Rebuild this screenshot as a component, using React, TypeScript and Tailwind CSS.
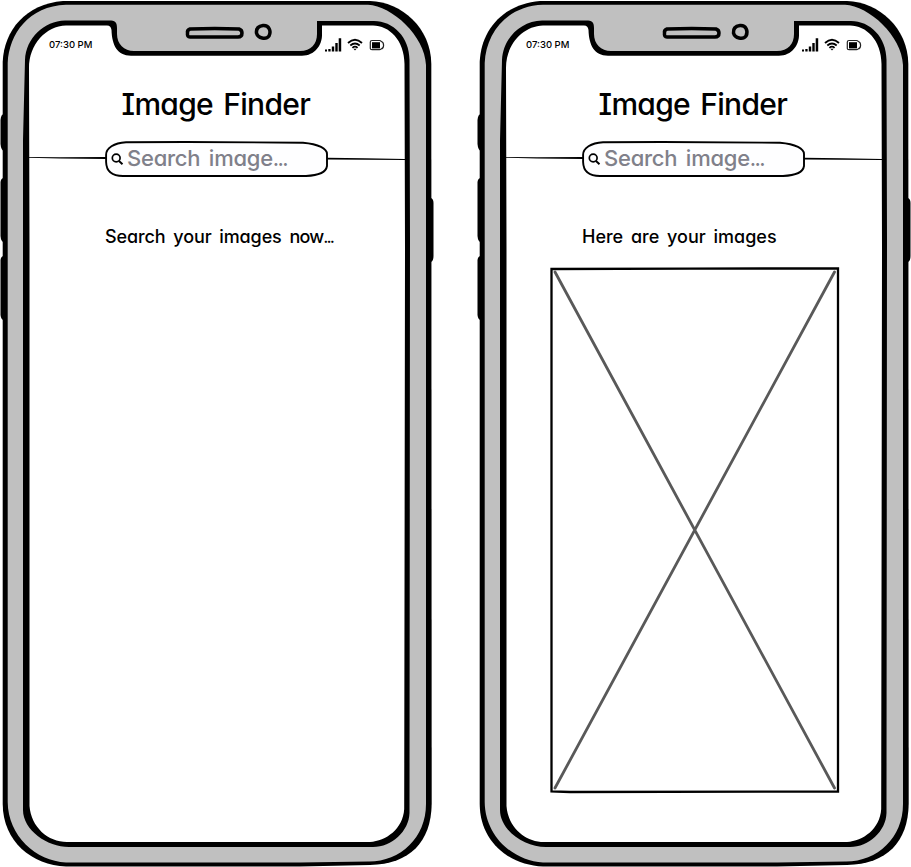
import type { ReactNode } from "react";

const SANS = "font-['Inter','Noto_Sans',sans-serif]";

function PhoneFrame() {
  return (
    <svg className="absolute inset-0" width="434" height="867" viewBox="0 0 434 867" fill="none">
      <path
        d="M4 114 Q1 114 .5 120 V144 Q1 150 4 151 H8 V114Z M4 178 Q1 178 .5 182 V236 Q1 242 4 242 H8 V178Z M4 256 Q1 256 .5 260 V315 Q1 320 4 320 H8 V256Z M428 198 H431 Q433.500 199 433.500 203 V256 Q433.500 261 431 262 H428Z"
        fill="#000"
      />
      <path
        d="M2.700 62 C4 30 26 4 63 1 H370 C402 2 431 28 431.300 64 L431.700 804 C431 842 410 864 370 865 L300 866.500 H66 C32 865 3 842 2.700 804Z"
        fill="#000"
      />
      <path
        d="M7.700 63 C9 34 29 6 66 4.800 H368 C392 6 425 36 426 65 V804 C426 838 400 862 368 861.500 L300 862.500 H66 C36 861 8 836 7.700 802Z"
        fill="#c0c0c0"
      />
      <path
        d="M25 60 C26 38 44 21 65 20.500 H109 C115 20.500 117 22 117 28 V34 C117 44 124 51 134 51 H300 C311 51 317 44 317 34 V21 H374 C393 21 409.500 37 409.500 60 L410 240 L409.500 813 C409 831 392 847 373 847 H69 C47 847 23 830 23 810 V140Z"
        fill="#000"
      />
      <path
        d="M29 68 C29 44 46 26 66 25.400 H107 C110 25.400 111 27 111.500 30 C112 45 117 55.700 131 55.700 H302 C315 55.700 322 45 322 35 V25.400 H373 C389 25.400 404.500 40 404.500 64 L405 250 L404.200 809 C403 829 386 841 370 842 H67 C48 842 31 827 29.500 806 L29.500 250Z"
        fill="#fff"
      />
      <path d="M190 29 Q215 28 239 29 Q242 30 242 33 Q242 37 238 37 H190 Q187 37 187.500 33 Q187 30 190 29Z" stroke="#000" strokeWidth="3.500" />
      <path d="M263 25.500 C269 25 271.500 31 269 36 C266 40 258 38.500 256.500 33 C256 28 259 26 263 25.500Z" stroke="#000" strokeWidth="3.500" />
      <path d="M28 157.100 L60 157.200 L106 157.100 V158.900 L60 158.600 L28 157.700Z" fill="#000" />
      <path d="M327 157.700 L365 158.200 L405 159 V160 L365 159.700 L327 159.400Z" fill="#000" />
    </svg>
  );
}

function StatusIcons() {
  return (
    <svg width="62" height="16" viewBox="0 0 62 16" fill="none">
      <path d="M1 12.500h2v2H1z M4.300 12h2.300v2.500h-2.300z M7.800 9.500h2.400v5H7.800z M11.300 6h2.400v8.500h-2.400z M14.700 1.300h2.500v13.200h-2.500z" fill="#000" />
      <path d="M24 6 Q31 -.5 38 6 M26.300 8.500 Q31 4.500 35.700 8.500 M28.400 10.800 Q31 8.500 33.600 10.800" stroke="#000" strokeWidth="1.800" />
      <path d="M29.400 11.700h3.200L31 13.500z" fill="#000" />
      <path d="M57 4.200 Q56.500 3.500 55.500 3.500 H48 Q46.300 3.500 46.300 5 V11.500 Q46.300 12.700 48 12.700 H55.500 Q56.500 12.700 57 12 Q59.600 11.500 59.600 8.200 Q59.600 5 57 4.200Z" stroke="#222" strokeWidth="1.200" />
      <path d="M48 5.200h8v6.200h-8z" fill="#000" />
    </svg>
  );
}

function SearchField() {
  return (
    <div className="relative mx-auto mt-[17px] flex h-[38px] w-[224px] items-center">
      <svg className="absolute inset-0" width="224" height="38" viewBox="0 0 224 38" fill="none">
        <path
          d="M21 2.200 L80 2 L198 2.700 C214 4 222 9 222 14 V26 C221 33 212 35.500 201 36 H18 C5 36 1.300 30 1.100 22 V15 C1 8 9 3 21 2.200Z"
          fill="#fefeff"
          stroke="#000"
          strokeWidth="1.900"
        />
      </svg>
      <svg className="relative ml-[6px]" width="13" height="14" viewBox="0 0 13 14" fill="none">
        <circle cx="5.200" cy="6" r="3.900" stroke="#000" strokeWidth="1.700" />
        <path d="m8 9 3.500 3.300" stroke="#000" strokeWidth="1.900" />
      </svg>
      <span className="relative ml-[3px] mt-[-3px] whitespace-nowrap text-[22px] font-medium leading-none tracking-[-0.25px] text-[#80808a] [font-feature-settings:'cv11','cv08'] [word-spacing:3px]">
        Search image<span className="font-normal tracking-[-1.6px]">...</span>
      </span>
    </div>
  );
}

function Phone({ message, children }: { message: ReactNode; children?: ReactNode }) {
  return (
    <section className="relative h-[867px] w-[434px] shrink-0">
      <PhoneFrame />
      <div className="relative flex h-full flex-col pt-[36px]">
        <header className="flex h-[17px] items-center justify-between pl-[49px] pr-[48px]">
          <span className="whitespace-nowrap text-[9.5px] font-medium leading-none">07:30 PM</span>
          <StatusIcons />
        </header>
        <h1 className="mt-[33px] h-[37px] whitespace-nowrap pl-[121.5px] text-[30px] font-medium leading-[37px] tracking-[-0.7px] [font-feature-settings:'cv11','cv08'] [word-spacing:3px]">
          Image Finder
        </h1>
        <SearchField />
        <p className="mt-[47px] h-[24px] whitespace-nowrap pl-[105px] text-[18px] font-medium leading-[24px] [font-feature-settings:'cv11','cv08'] [word-spacing:3px]">
          {message}
        </p>
        {children}
      </div>
    </section>
  );
}

function ImagePlaceholder() {
  return (
    <svg className="ml-[73px] mt-[17px] shrink-0" width="290" height="528" viewBox="0 0 290 528" fill="none">
      <path d="M5 6 L284.500 522 M284.500 6 L5 522" stroke="#595959" strokeWidth="2.800" strokeLinecap="round" />
      <path d="M1.500 3 L140 2.600 L288 2.400 V525.600 L20 526 L1.500 525.500Z" stroke="#000" strokeWidth="2.300" />
    </svg>
  );
}

export default function App() {
  return (
    <main className={`flex h-[867px] w-[911px] gap-[43px] overflow-hidden bg-white text-black ${SANS}`}>
      <Phone
        message={
          <span className="tracking-[-0.1px]">
            Search your images <span className="tracking-[-0.8px]">now</span>
            <span className="font-normal tracking-[-2px]">...</span>
          </span>
        }
      />
      <Phone message="Here are your images">
        <ImagePlaceholder />
      </Phone>
    </main>
  );
}
